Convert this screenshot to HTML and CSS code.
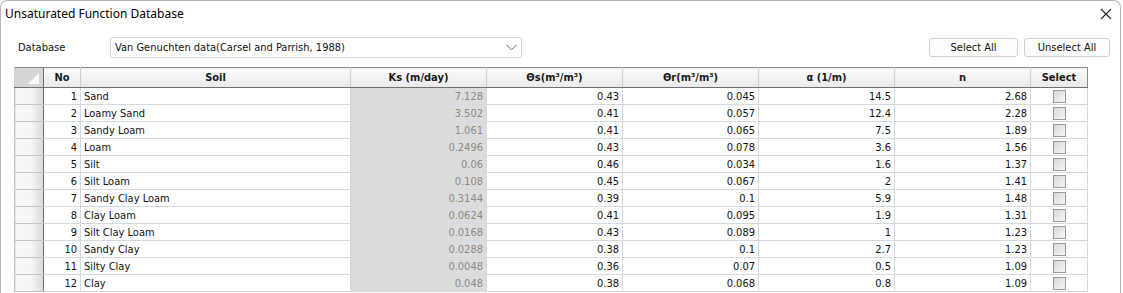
FILE: index.html
```html
<!DOCTYPE html>
<html lang="en">
<head>
  <meta charset="UTF-8">
  <title>Unsaturated Function Database</title>
  <link rel="stylesheet" href="styles.css">
</head>
<body>
  <div class="window">
    <!-- Title bar -->
    <div class="titlebar">
      <span class="title">Unsaturated Function Database</span>
      <svg class="close" width="12" height="12" viewBox="0 0 12 12">
        <path d="M1 1 L11 11 M11 1 L1 11" stroke="#222" stroke-width="1.1" fill="none"/>
      </svg>
    </div>

    <!-- Database picker -->
    <div class="toolbar">
      <span class="label">Database</span>
      <div class="combo">
        <span>Van Genuchten data(Carsel and Parrish, 1988)</span>
        <svg width="11" height="7" viewBox="0 0 11 7">
          <polyline points="0.5,0.8 5.5,5.8 10.5,0.8" stroke="#666" stroke-width="1" fill="none"/>
        </svg>
      </div>
      <div class="spacer"></div>
      <button class="btn select">Select All</button>
      <button class="btn unselect">Unselect All</button>
    </div>

    <!-- Grid -->
    <div class="grid-wrap">
      <table class="grid">
        <colgroup>
          <col class="c-corner">
          <col class="c-no">
          <col class="c-soil">
          <col class="c-num">
          <col class="c-num">
          <col class="c-num">
          <col class="c-num">
          <col class="c-num">
          <col class="c-sel">
        </colgroup>
        <thead>
          <tr>
            <th class="corner"></th>
            <th>No</th>
            <th>Soil</th>
            <th>Ks (m/day)</th>
            <th>Θs(m³/m³)</th>
            <th>Θr(m³/m³)</th>
            <th>α (1/m)</th>
            <th>n</th>
            <th>Select</th>
          </tr>
        </thead>
        <tbody>
          <tr><td class="rh"></td><td class="num">1</td><td>Sand</td><td class="ks">7.128</td><td class="num">0.43</td><td class="num">0.045</td><td class="num">14.5</td><td class="num">2.68</td><td class="chk"><span class="box"></span></td></tr>
          <tr><td class="rh"></td><td class="num">2</td><td>Loamy Sand</td><td class="ks">3.502</td><td class="num">0.41</td><td class="num">0.057</td><td class="num">12.4</td><td class="num">2.28</td><td class="chk"><span class="box"></span></td></tr>
          <tr><td class="rh"></td><td class="num">3</td><td>Sandy Loam</td><td class="ks">1.061</td><td class="num">0.41</td><td class="num">0.065</td><td class="num">7.5</td><td class="num">1.89</td><td class="chk"><span class="box"></span></td></tr>
          <tr><td class="rh"></td><td class="num">4</td><td>Loam</td><td class="ks">0.2496</td><td class="num">0.43</td><td class="num">0.078</td><td class="num">3.6</td><td class="num">1.56</td><td class="chk"><span class="box"></span></td></tr>
          <tr><td class="rh"></td><td class="num">5</td><td>Silt</td><td class="ks">0.06</td><td class="num">0.46</td><td class="num">0.034</td><td class="num">1.6</td><td class="num">1.37</td><td class="chk"><span class="box"></span></td></tr>
          <tr><td class="rh"></td><td class="num">6</td><td>Silt Loam</td><td class="ks">0.108</td><td class="num">0.45</td><td class="num">0.067</td><td class="num">2</td><td class="num">1.41</td><td class="chk"><span class="box"></span></td></tr>
          <tr><td class="rh"></td><td class="num">7</td><td>Sandy Clay Loam</td><td class="ks">0.3144</td><td class="num">0.39</td><td class="num">0.1</td><td class="num">5.9</td><td class="num">1.48</td><td class="chk"><span class="box"></span></td></tr>
          <tr><td class="rh"></td><td class="num">8</td><td>Clay Loam</td><td class="ks">0.0624</td><td class="num">0.41</td><td class="num">0.095</td><td class="num">1.9</td><td class="num">1.31</td><td class="chk"><span class="box"></span></td></tr>
          <tr><td class="rh"></td><td class="num">9</td><td>Silt Clay Loam</td><td class="ks">0.0168</td><td class="num">0.43</td><td class="num">0.089</td><td class="num">1</td><td class="num">1.23</td><td class="chk"><span class="box"></span></td></tr>
          <tr><td class="rh"></td><td class="num">10</td><td>Sandy Clay</td><td class="ks">0.0288</td><td class="num">0.38</td><td class="num">0.1</td><td class="num">2.7</td><td class="num">1.23</td><td class="chk"><span class="box"></span></td></tr>
          <tr><td class="rh"></td><td class="num">11</td><td>Silty Clay</td><td class="ks">0.0048</td><td class="num">0.36</td><td class="num">0.07</td><td class="num">0.5</td><td class="num">1.09</td><td class="chk"><span class="box"></span></td></tr>
          <tr><td class="rh"></td><td class="num">12</td><td>Clay</td><td class="ks">0.048</td><td class="num">0.38</td><td class="num">0.068</td><td class="num">0.8</td><td class="num">1.09</td><td class="chk"><span class="box"></span></td></tr>
        </tbody>
      </table>
    </div>
  </div>
</body>
</html>
```

FILE: styles.css
```css
body {
  margin: 0;
  background: #fff;
  font-family: "DejaVu Sans Condensed", "DejaVu Sans", sans-serif;
  font-stretch: condensed;
  font-size: 11px;
  color: #111;
}

.window {
  width: 1121px;
  height: 293px;
  box-sizing: border-box;
  border: 1px solid #b4b4b4;
  border-bottom: none;
  border-radius: 7px 7px 0 0;
  background: #fff;
  overflow: hidden;
}

.titlebar {
  height: 25px;
  display: flex;
  align-items: center;
  justify-content: space-between;
  padding: 0 8px 0 4px;
}

.title {
  font-family: "Noto Sans", sans-serif;
  font-stretch: normal;
  font-size: 12px;
  color: #000;
}

.toolbar {
  display: flex;
  align-items: center;
  height: 21px;
  margin-top: 11px;
  padding: 0 10px 0 17px;
}

.label {
  width: 92px;
}

.combo {
  width: 412px;
  height: 21px;
  box-sizing: border-box;
  border: 1px solid #d2d2d2;
  border-radius: 3px;
  display: flex;
  align-items: center;
  justify-content: space-between;
  padding: 0 4px 0 4px;
}

.spacer {
  flex: 1;
}

.btn {
  height: 19px;
  box-sizing: border-box;
  border: 1px solid #d0d0d0;
  border-radius: 3px;
  background: #fdfdfd;
  font-family: inherit;
  font-size: 11px;
  color: #111;
  padding: 0;
}

.btn.select {
  width: 89px;
}

.btn.unselect {
  width: 86px;
  margin-left: 6px;
}

.grid-wrap {
  margin: 9px 0 0 13px;
}

.grid {
  width: 1074px;
  table-layout: fixed;
  border-collapse: collapse;
  border: 1px solid #8c8c8c;
}

.c-corner { width: 29px; }
.c-no { width: 37px; }
.c-soil { width: 270px; }
.c-num { width: 136px; }
.c-sel { width: 57px; }

.grid th {
  height: 19px;
  padding: 0;
  font-weight: bold;
  text-align: center;
  background: linear-gradient(#fbfbfb, #e9e9e9);
  border-left: 1px solid #cfcfcf;
  border-bottom: 1px solid #6f6f6f;
  color: #1a1a1a;
}

.grid th.corner {
  position: relative;
  background: #d6d6d6;
  border-right: 1px solid #6f6f6f;
}

.grid th.corner::after {
  content: "";
  position: absolute;
  right: 4px;
  bottom: 3px;
  width: 11px;
  height: 11px;
  background: #fafafa;
  clip-path: polygon(100% 0, 100% 100%, 0 100%);
}

.grid td {
  height: 14px;
  padding: 2px 3px 0;
  white-space: nowrap;
  border: 1px solid #d3d9e2;
  line-height: 14px;
}

.grid td.rh {
  background: linear-gradient(to right, #f6f6f6 55%, #d9d9d9);
  border-color: #c4c4c4;
  border-right: 1px solid #6f6f6f;
}

.grid td.num {
  text-align: right;
}

.grid td.ks {
  text-align: right;
  background: #dcdcdc;
  color: #8a8a8a;
}

.grid td.chk {
  text-align: center;
  padding: 0;
}

.box {
  display: inline-block;
  width: 11px;
  height: 11px;
  vertical-align: middle;
  border: 1px solid #9a9a9a;
  background: linear-gradient(135deg, #d8d8d8, #f6f6f6);
}
```
